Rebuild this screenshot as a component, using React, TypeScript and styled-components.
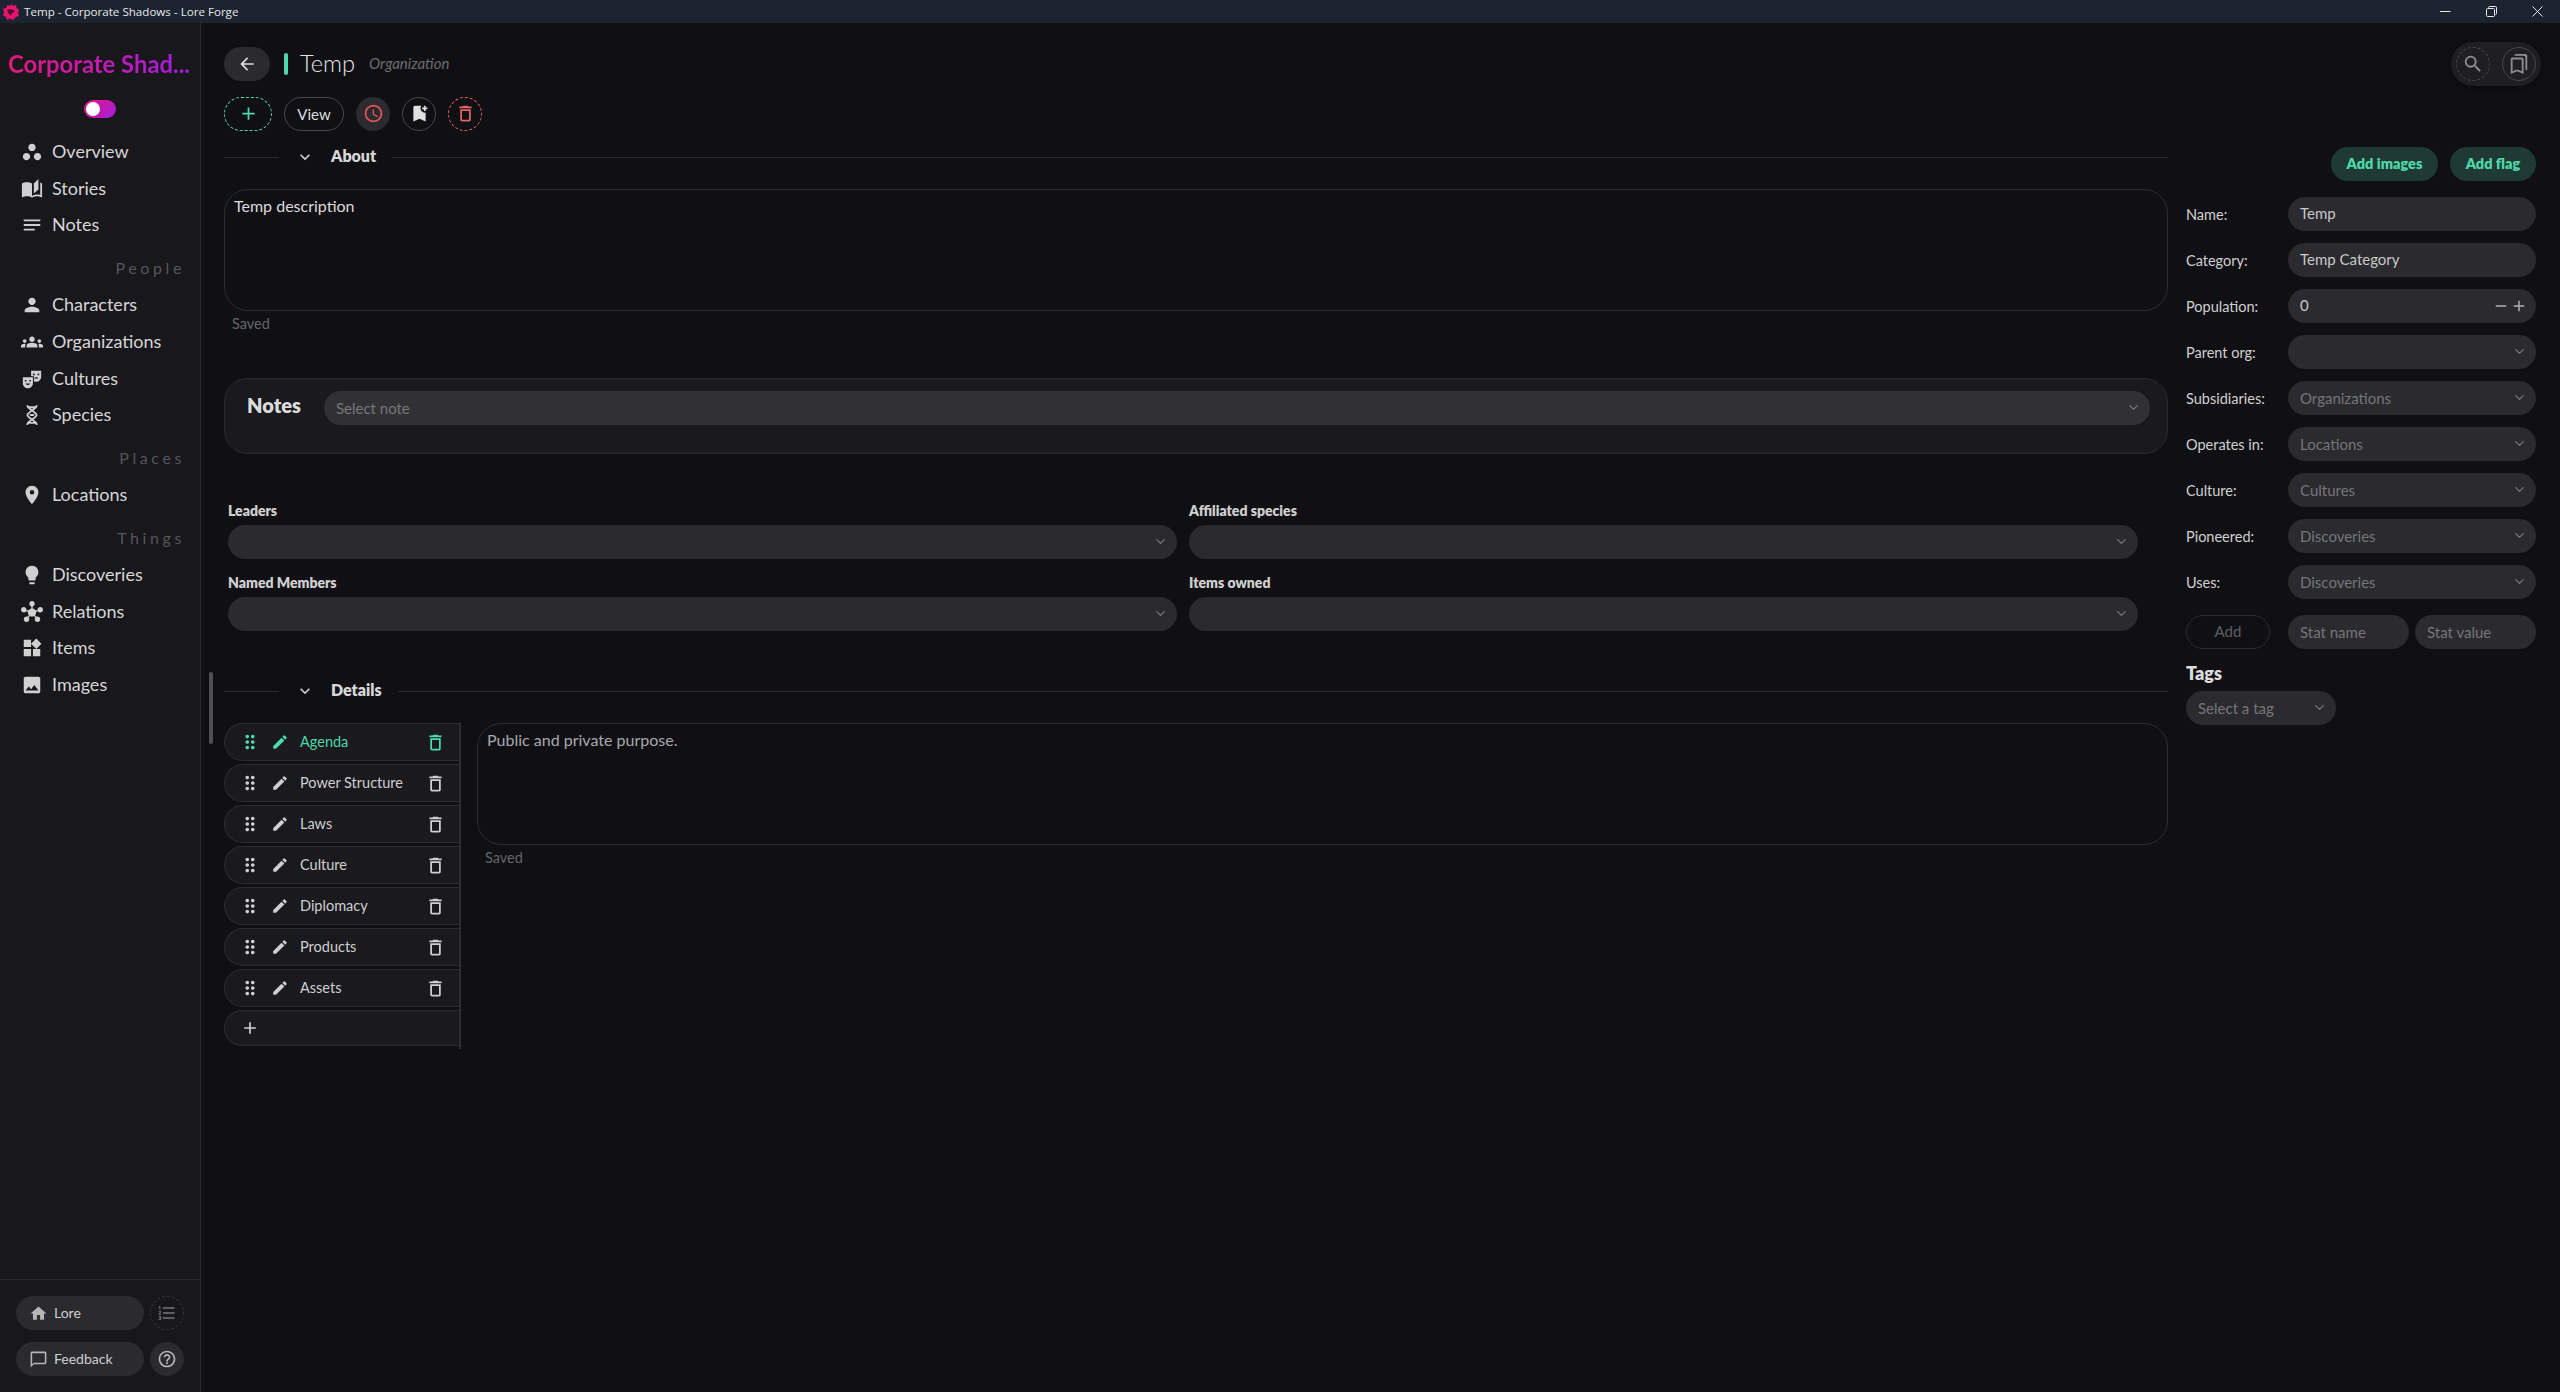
import React from "react";
import styled, { createGlobalStyle } from "styled-components";
import {
  MdWorkspaces, MdAutoStories, MdNotes, MdPerson, MdGroups, MdTheaterComedy, MdPlace, MdLightbulb, MdHub,
  MdWidgets, MdImage, MdHome, MdFormatListNumbered, MdChatBubbleOutline, MdHelpOutline, MdArrowBack, MdAdd,
  MdAccessTime, MdBookmarkAdd, MdDeleteOutline, MdSearch, MdOutlineBookmarks, MdDragIndicator, MdEdit, MdExpandMore, MdRemove,
} from "react-icons/md";
import { ChevronDown } from "lucide-react";

const UI = `Lato, "Noto Sans", sans-serif`;

const Global = createGlobalStyle`
  html, body { margin: 0; padding: 0; background: #101014; }
  body { font-family: ${UI}; color: #d8d8d8; overflow: hidden; }
  * { box-sizing: border-box; }
`;

const Page = styled.div`
  width: 2560px; height: 1392px; display: flex; flex-direction: column; background: #101014; overflow: hidden;
`;
const TitleBar = styled.div`
  height: 23px; flex: none; background: #1b2430; display: flex; align-items: center; padding-left: 2px;
  color: #e8e8e8; font: 11.6px "Open Sans", sans-serif;
`;
const TitleText = styled.span` margin-left: 4px; flex: 1; `;
const WinButton = styled.span`
  width: 46px; height: 23px; display: flex; align-items: center; justify-content: center; color: #e8e8e8;
`;
const Body = styled.div` flex: 1; display: flex; min-height: 0; position: relative; `;

const Sidebar = styled.aside`
  width: 201px; flex: none; background: #17171c; border-right: 1px solid #2a2a30; display: flex; flex-direction: column; padding-top: 26px;
`;
const Brand = styled.div`
  height: 30px; line-height: 30px; padding-left: 8px; font-size: 23.8px; font-weight: 700; white-space: nowrap;
  width: 190px;
  background: linear-gradient(90deg, #e6177c, #a41de0); -webkit-background-clip: text; background-clip: text; color: transparent;
`;
const Toggle = styled.div`
  width: 32px; height: 18px; margin: 21px 0 0 84px; border-radius: 9px; background: linear-gradient(135deg, #e6177c, #a41de0); position: relative;
  &::after { content: ""; position: absolute; left: 2px; top: 2px; width: 14px; height: 14px; border-radius: 50%; background: #fff; }
`;
const Nav = styled.nav` margin-top: 15.7px; `;
const NavItem = styled.div`
  height: 36.67px; display: flex; align-items: center; padding-left: 21px; gap: 9px; font-size: 18px; color: #d6d6d6;
  svg { width: 22px; height: 22px; flex: none; color: #d0d0d0; }
`;
const NavLabel = styled.span` margin-top: -2px; `;
const NavGroup = styled.div`
  height: 43.3px; padding: 5px 15px 0 0; display: flex; align-items: center; justify-content: flex-end;
  font-size: 16px; letter-spacing: 3.6px; color: #55555b;
`;
const SideFooter = styled.div`
  margin-top: auto; border-top: 1px solid #2a2a30; padding: 16px 0 16px 16px; display: grid; grid-template-columns: 128px 34px; gap: 12px 6px;
`;
const FootPill = styled.div`
  height: 34px; border-radius: 17px; background: #2a2a2f; display: flex; align-items: center; padding-left: 13px; gap: 6px; font-size: 14px; color: #d0d0d0;
  svg { width: 19px; height: 19px; color: #b5b5b5; }
`;
const FootLabel = styled.span` margin-top: -2px; `;
const FootCircle = styled.div<{ $dashed?: boolean }>`
  width: 34px; height: 34px; border-radius: 50%; display: flex; align-items: center; justify-content: center;
  background: ${(p) => (p.$dashed ? "transparent" : "#2a2a2f")};
  border: ${(p) => (p.$dashed ? "1px dashed #37373c" : "none")};
  color: ${(p) => (p.$dashed ? "#77777c" : "#b5b5b5")};
  svg { width: 20px; height: 20px; }
`;

const Main = styled.main` flex: 1; min-width: 0; padding: 19px 24px 0 23px; `;
const Scroll = styled.div`
  position: absolute; left: 209px; top: 649px; width: 4px; height: 72px; border-radius: 2px; background: #4e4e58;
`;
const Header = styled.header` height: 44px; display: flex; align-items: center; `;
const BackPill = styled.div`
  width: 46px; height: 34px; border-radius: 17px; background: #2a2a2f; display: flex; align-items: center; justify-content: center; color: #ddd;
  svg { width: 20px; height: 20px; }
`;
const AccentBar = styled.div` width: 4px; height: 22px; border-radius: 2px; background: #4fd8a8; margin-left: 14px; `;
const PageTitle = styled.h1` margin: -2px 0 0 12px; font-size: 23.6px; font-weight: 300; color: #e4e4e4; `;
const PageKind = styled.span` margin: -2px 0 0 14px; font-size: 15px; font-style: italic; color: #6d6d72; `;
const TopGroup = styled.div`
  margin: 0 -5px 0 auto; height: 44px; padding: 5px; display: flex; gap: 12px; border-radius: 22px; background: #1f1f23; box-shadow: 0 2px 6px rgba(0,0,0,.35);
`;
const TopCircle = styled.div<{ $dashed?: boolean }>`
  width: 34px; height: 34px; border-radius: 50%; display: flex; align-items: center; justify-content: center; color: #8d8d92;
  border: 1px ${(p) => (p.$dashed ? "dashed #47474c" : "solid #47474c")};
  svg { width: 22px; height: 22px; }
`;
const Toolbar = styled.div` margin-top: 11px; display: flex; gap: 12px; height: 34px; `;
const ToolButton = styled.div<{ $w: number; $border?: string; $bg?: string; $color?: string }>`
  width: ${(p) => p.$w}px; height: 34px; border-radius: 17px; display: flex; align-items: center; justify-content: center; font-size: 15px; padding-bottom: 1px;
  border: ${(p) => p.$border || "none"}; background: ${(p) => p.$bg || "transparent"}; color: ${(p) => p.$color || "#ddd"};
  svg { width: 21px; height: 21px; }
`;

const Columns = styled.div` margin-top: 16px; display: grid; grid-template-columns: 1944px 350px; gap: 18px; `;
const CenterCol = styled.section` min-width: 0; `;
const SectionHead = styled.div<{ $top?: number }>`
  height: 20px; display: flex; align-items: center; gap: 16px; margin-top: ${(p) => p.$top || 0}px;
  &::before { content: ""; width: 55px; height: 1px; background: #2a2a30; }
  &::after { content: ""; flex: 1; height: 1px; background: #2a2a30; }
  svg { width: 20px; height: 20px; color: #cfcfcf; }
`;
const SectionTitle = styled.h2` margin: -3px 0 0; font-size: 16px; font-weight: 800; color: #d8d8d8; `;
const TextBox = styled.div<{ $color?: string }>`
  height: 122px; border: 1px solid #2c2c31; border-radius: 24px; padding: 6px 9px; font-size: 16px; line-height: 20px; color: ${(p) => p.$color || "#dcdcdc"};
`;
const Saved = styled.div` margin: 4px 0 0 8px; font-size: 14.5px; line-height: 17px; color: #66666b; `;
const AboutBody = styled.div` margin-top: 22px; `;
const NotesPanel = styled.div`
  margin-top: 46px; height: 76px; border: 1px solid #2a2a30; border-radius: 24px; background: #19191e; padding: 12px 17px 0 22px; display: flex; gap: 23px;
`;
const NotesTitle = styled.h3` margin: 2px 0 0; font-size: 20px; font-weight: 800; color: #dcdcdc; `;
const Select = styled.div<{ $bg?: string; $w?: number }>`
  height: 34px; border-radius: 17px; background: ${(p) => p.$bg || "#2a2a2f"}; display: flex; align-items: center; justify-content: space-between;
  padding: 0 9px 1px 12px; font-size: 15px; color: #76767b; min-width: 0; width: ${(p) => (p.$w ? `${p.$w}px` : "auto")};
  flex: ${(p) => (p.$w ? "none" : 1)};
  svg { width: 15px; height: 15px; color: #77777c; flex: none; }
`;
const LinkGrid = styled.div`
  margin-top: 49px; padding-right: 30px; padding-left: 4px; display: grid; grid-template-columns: 949px 949px; gap: 16px 12px;
`;
const LinkField = styled.div`
  display: flex; flex-direction: column; gap: 6px;
  ${Select} { flex: none; }
`;
const LinkLabel = styled.label` font-size: 14px; line-height: 16px; font-weight: 800; color: #cfcfcf; `;
const DetailBody = styled.div` margin-top: 22px; display: flex; gap: 16px; align-items: flex-start; `;
const TabList = styled.div`
  width: 237px; height: 326px; border-right: 2px solid #2c2c31; display: flex; flex-direction: column; gap: 3px; flex: none;
`;
const TabRow = styled.div<{ $active?: boolean; $h?: number }>`
  height: ${(p) => p.$h || 38}px; flex: none; border: 1px solid #2c2c31; border-right: 0; border-radius: 19px 0 0 19px; background: #19191e;
  display: flex; align-items: center; font-size: 14.5px; color: ${(p) => (p.$active ? "#4fd8a8" : "#cfcfcf")};
  svg { flex: none; }
`;
const Grip = styled(MdDragIndicator)` width: 22px; height: 22px; margin-left: 14px; `;
const Pencil = styled(MdEdit)` width: 18px; height: 18px; margin-left: 10px; `;
const TabName = styled.span` margin: -2px 0 0 11px; flex: 1; white-space: nowrap; `;
const TabTrash = styled(MdDeleteOutline)` width: 21px; height: 21px; margin-right: 13px; `;
const AddGlyph = styled(MdAdd)` width: 20px; height: 20px; margin-left: 15px; `;
const DetailText = styled.div` flex: 1; min-width: 0; `;

const RightCol = styled.aside` min-width: 0; `;
const ActionRow = styled.div` display: flex; justify-content: flex-end; gap: 12px; `;
const GreenButton = styled.div<{ $w: number }>`
  width: ${(p) => p.$w}px; height: 34px; border-radius: 17px; background: #1f3a34; color: #4fd8a8; font-size: 14.5px; font-weight: 800;
  display: flex; align-items: center; justify-content: center; padding-bottom: 2px;
`;
const Fields = styled.div` margin-top: 16px; display: flex; flex-direction: column; gap: 12px; `;
const FieldRow = styled.div` display: flex; align-items: center; height: 34px; `;
const FieldLabel = styled.label` width: 102px; flex: none; font-size: 14.5px; color: #d0d0d0; padding-top: 1px; `;
const Input = styled.div`
  flex: 1; height: 34px; border-radius: 17px; background: #2a2a2f; display: flex; align-items: center; padding: 0 8px 2px 12px; font-size: 15px; color: #c8c8c8;
`;
const Stepper = styled.span`
  margin: 2px 0 0 auto; display: flex; color: #b0b0b4;
  svg { width: 18px; height: 18px; }
`;
const StatRow = styled.div` margin-top: 16px; display: grid; grid-template-columns: 84px 139px 127px; `;
const AddStat = styled.div`
  width: 84px; height: 34px; border-radius: 17px; border: 1px solid #2a2a30; color: #5f5f64; font-size: 15px; display: flex; align-items: center; justify-content: center; padding-bottom: 2px;
`;
const StatInput = styled.div<{ $left: number }>`
  height: 34px; border-radius: 17px; background: #2a2a2f; color: #76767b; font-size: 15px; display: flex; align-items: center; padding-left: 12px; margin-left: ${(p) => p.$left}px;
`;
const TagsTitle = styled.h3` margin: 13px 0 7px; font-size: 18px; line-height: 22px; font-weight: 800; color: #dcdcdc; `;

const Logo = () => (
  <svg width="18" height="18" viewBox="0 0 18 18">
    <path d="M9 1 L11 3 L14 2 L14.5 5 L17 7 L16 10 L17 13 L13.5 14 L11 17 L8 15.5 L5 17 L4 14 L1 12.5 L2 9 L1 5.5 L4 5 L5.5 2 L8 3 Z" fill="#e6146e" />
    <path d="M5 7 C7 5.5 11 6 13 8.5 C11 9 9.5 10.5 8.5 13 C7.5 11.5 6 9.5 5 7 Z" fill="#4a1030" />
  </svg>
);

const DnaIcon = () => (
  <svg viewBox="0 0 24 24" fill="none" stroke="currentColor" strokeWidth="2" strokeLinecap="round">
    <path d="M7 2C7 5 17 9 17 12C17 15 7 19 7 22" />
    <path d="M17 2C17 5 7 9 7 12C7 15 17 19 17 22" />
    <path d="M8 3.5H16M8 20.5H16M10.5 12H13.5" />
  </svg>
);

const mainNav = [
  { icon: <MdWorkspaces />, label: "Overview" },
  { icon: <MdAutoStories />, label: "Stories" },
  { icon: <MdNotes />, label: "Notes" },
];
const navGroups = [
  { title: "People", items: [
    { icon: <MdPerson />, label: "Characters" },
    { icon: <MdGroups />, label: "Organizations" },
    { icon: <MdTheaterComedy />, label: "Cultures" },
    { icon: <DnaIcon />, label: "Species" },
  ] },
  { title: "Places", items: [{ icon: <MdPlace />, label: "Locations" }] },
  { title: "Things", items: [
    { icon: <MdLightbulb />, label: "Discoveries" },
    { icon: <MdHub />, label: "Relations" },
    { icon: <MdWidgets />, label: "Items" },
    { icon: <MdImage />, label: "Images" },
  ] },
];
const selectFields = [
  ["Parent org:", ""], ["Subsidiaries:", "Organizations"], ["Operates in:", "Locations"],
  ["Culture:", "Cultures"], ["Pioneered:", "Discoveries"], ["Uses:", "Discoveries"],
];
const tabs = ["Agenda", "Power Structure", "Laws", "Culture", "Diplomacy", "Products", "Assets"];

export default function App() {
  return (
    <Page>
      <Global />
      <TitleBar>
        <Logo />
        <TitleText>Temp - Corporate Shadows - Lore Forge</TitleText>
        <WinButton>
          <svg width="11" height="11" viewBox="0 0 11 11"><path d="M0 5.5H10.5" stroke="currentColor" /></svg>
        </WinButton>
        <WinButton>
          <svg width="11" height="11" viewBox="0 0 11 11" fill="none" stroke="currentColor"><rect x=".5" y="2.5" width="8" height="8" rx="1" /><path d="M2.5 2.5V1.5A1 1 0 0 1 3.5 .5H9.5A1 1 0 0 1 10.5 1.5V7.5A1 1 0 0 1 9.5 8.5" /></svg>
        </WinButton>
        <WinButton>
          <svg width="11" height="11" viewBox="0 0 11 11"><path d="M.5 .5L10.5 10.5M10.5 .5L.5 10.5" stroke="currentColor" /></svg>
        </WinButton>
      </TitleBar>
      <Body>
        <Sidebar>
          <Brand>Corporate Shad...</Brand>
          <Toggle />
          <Nav>
            {mainNav.map((n) => <NavItem key={n.label}>{n.icon}<NavLabel>{n.label}</NavLabel></NavItem>)}
            {navGroups.map((g) => (
              <React.Fragment key={g.title}>
                <NavGroup>{g.title}</NavGroup>
                {g.items.map((n) => <NavItem key={n.label}>{n.icon}<NavLabel>{n.label}</NavLabel></NavItem>)}
              </React.Fragment>
            ))}
          </Nav>
          <SideFooter>
            <FootPill><MdHome /><FootLabel>Lore</FootLabel></FootPill>
            <FootCircle $dashed><MdFormatListNumbered /></FootCircle>
            <FootPill><MdChatBubbleOutline /><FootLabel>Feedback</FootLabel></FootPill>
            <FootCircle><MdHelpOutline /></FootCircle>
          </SideFooter>
        </Sidebar>
        <Scroll />
        <Main>
          <Header>
            <BackPill><MdArrowBack /></BackPill>
            <AccentBar />
            <PageTitle>Temp</PageTitle>
            <PageKind>Organization</PageKind>
            <TopGroup>
              <TopCircle $dashed><MdSearch /></TopCircle>
              <TopCircle><MdOutlineBookmarks /></TopCircle>
            </TopGroup>
          </Header>
          <Toolbar>
            <ToolButton $w={48} $border="1px dashed #4fd8a8" $color="#4fd8a8"><MdAdd /></ToolButton>
            <ToolButton $w={60} $border="1px solid #47474c">View</ToolButton>
            <ToolButton $w={34} $bg="#2a2a2f" $color="#e25555"><MdAccessTime /></ToolButton>
            <ToolButton $w={34} $border="1px solid #47474c" $color="#e0e0e0"><MdBookmarkAdd /></ToolButton>
            <ToolButton $w={34} $border="1px dashed #e06666" $color="#e06666"><MdDeleteOutline /></ToolButton>
          </Toolbar>
          <Columns>
            <CenterCol>
              <SectionHead><MdExpandMore /><SectionTitle>About</SectionTitle></SectionHead>
              <AboutBody>
                <TextBox>Temp description</TextBox>
                <Saved>Saved</Saved>
              </AboutBody>
              <NotesPanel>
                <NotesTitle>Notes</NotesTitle>
                <Select $bg="#313135">Select note<ChevronDown /></Select>
              </NotesPanel>
              <LinkGrid>
                {["Leaders", "Affiliated species", "Named Members", "Items owned"].map((l) => (
                  <LinkField key={l}>
                    <LinkLabel>{l}</LinkLabel>
                    <Select><span /><ChevronDown /></Select>
                  </LinkField>
                ))}
              </LinkGrid>
              <SectionHead $top={50}><MdExpandMore /><SectionTitle>Details</SectionTitle></SectionHead>
              <DetailBody>
                <TabList>
                  {tabs.map((t, i) => (
                    <TabRow key={t} $active={i === 0}>
                      <Grip /><Pencil /><TabName>{t}</TabName><TabTrash />
                    </TabRow>
                  ))}
                  <TabRow $h={36}><AddGlyph /></TabRow>
                </TabList>
                <DetailText>
                  <TextBox $color="#a8a8ac">Public and private purpose.</TextBox>
                  <Saved>Saved</Saved>
                </DetailText>
              </DetailBody>
            </CenterCol>
            <RightCol>
              <ActionRow>
                <GreenButton $w={107}>Add images</GreenButton>
                <GreenButton $w={86}>Add flag</GreenButton>
              </ActionRow>
              <Fields>
                <FieldRow><FieldLabel>Name:</FieldLabel><Input>Temp</Input></FieldRow>
                <FieldRow><FieldLabel>Category:</FieldLabel><Input>Temp Category</Input></FieldRow>
                <FieldRow>
                  <FieldLabel>Population:</FieldLabel>
                  <Input>0<Stepper><MdRemove /><MdAdd /></Stepper></Input>
                </FieldRow>
                {selectFields.map(([label, ph]) => (
                  <FieldRow key={label}>
                    <FieldLabel>{label}</FieldLabel>
                    <Select>{ph || <span />}<ChevronDown /></Select>
                  </FieldRow>
                ))}
              </Fields>
              <StatRow>
                <AddStat>Add</AddStat>
                <StatInput $left={18}>Stat name</StatInput>
                <StatInput $left={6}>Stat value</StatInput>
              </StatRow>
              <TagsTitle>Tags</TagsTitle>
              <Select $w={150}>Select a tag<ChevronDown /></Select>
            </RightCol>
          </Columns>
        </Main>
      </Body>
    </Page>
  );
}
